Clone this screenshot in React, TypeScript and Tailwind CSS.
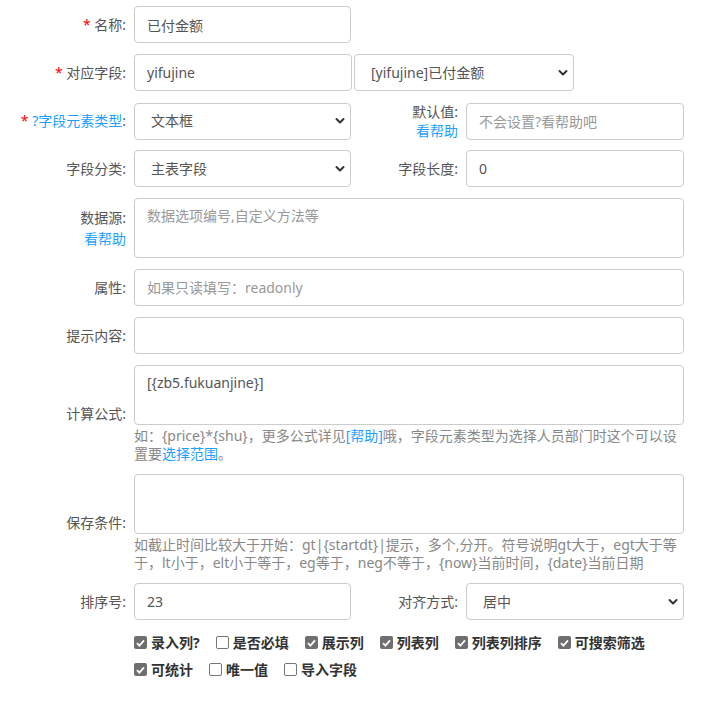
import React from 'react';

const font = "font-['Noto_Sans','Noto_Sans_CJK_SC',sans-serif]";
const inputCls =
  'h-[37px] w-full rounded border border-[#ccc] bg-white px-3 text-sm text-[#555] outline-none placeholder:text-[#999]';
const areaCls =
  'block h-[60px] w-full resize-none rounded border border-[#ccc] bg-white px-3 pt-[7px] text-sm leading-5 text-[#555] outline-none placeholder:text-[#999]';
const linkCls = 'text-[#1e9fff]';

function Req() {
  return <span className="text-[#f00]">* </span>;
}

function Label({ children }: { children: React.ReactNode }) {
  return <div className="pr-2 text-right text-sm leading-[20px] text-[#555]">{children}</div>;
}

function Label2({ children }: { children: React.ReactNode }) {
  return <div className="pr-[8px] text-right text-sm leading-[19px] text-[#555]">{children}</div>;
}

function Select({ value, className = '' }: { value: string; className?: string }) {
  return (
    <div className={`relative ${className}`}>
      <select
        defaultValue={value}
        className="h-[37px] w-full appearance-none rounded border border-[#ccc] bg-white pl-[16px] pr-8 text-sm text-[#555] outline-none"
      >
        <option>{value}</option>
      </select>
      <svg
        className="pointer-events-none absolute right-[6px] top-1/2 -translate-y-1/2"
        width="10"
        height="7"
        viewBox="0 0 10 7"
      >
        <path d="M1.5 1.5l3.5 3.5 3.5-3.5" fill="none" stroke="#333" strokeWidth="2" strokeLinecap="round" strokeLinejoin="round" />
      </svg>
    </div>
  );
}

function Check({ label, checked }: { label: string; checked?: boolean }) {
  return (
    <span className="mr-[16px] inline-flex items-center">
      {checked ? (
        <span className="flex h-[13px] w-[13px] items-center justify-center rounded-[2px] bg-[#6f6f6f]">
          <svg width="9" height="8" viewBox="0 0 9 8">
            <path d="M1 4.2l2.4 2.4L8 1.4" fill="none" stroke="#fff" strokeWidth="1.8" />
          </svg>
        </span>
      ) : (
        <span className="h-[13px] w-[13px] rounded-[2px] border border-[#767676] bg-white" />
      )}
      <span className="ml-[4px] text-sm font-bold text-[#333]">{label}</span>
    </span>
  );
}

const grid = 'grid grid-cols-[134px_217px_115px_218px] items-center';
const row = `${grid} h-[37px]`;
const hintCls = 'mt-[2px] whitespace-nowrap text-sm leading-[18px] text-[#888]';

export default function App() {
  return (
    <div className={`${font} min-h-screen bg-white pt-[6px]`}>
      <div className="flex w-[684px] flex-col gap-[11px]">
        <div className={row}>
          <Label>
            <Req />名称:
          </Label>
          <input className={inputCls} defaultValue="已付金额" />
        </div>

        <div className={row}>
          <Label>
            <Req />对应字段:
          </Label>
          <div className="col-span-3 flex">
            <input className={`${inputCls} !w-[218px]`} defaultValue="yifujine" />
            <Select value="[yifujine]已付金额" className="ml-[2px] w-[220px]" />
          </div>
        </div>

        <div className={row}>
          <Label>
            <Req />
            <span className={linkCls}>?字段元素类型</span>:
          </Label>
          <Select value="文本框" />
          <Label2>
            默认值:
            <br />
            <span className={linkCls}>看帮助</span>
          </Label2>
          <input className={inputCls} placeholder="不会设置?看帮助吧" />
        </div>

        <div className={row}>
          <Label>字段分类:</Label>
          <Select value="主表字段" />
          <Label2>字段长度:</Label2>
          <input className={inputCls} defaultValue="0" />
        </div>

        <div className={grid}>
          <div className="pr-2 text-right text-sm leading-[21px] text-[#555]">
            数据源:
            <br />
            <span className={linkCls}>看帮助</span>
          </div>
          <div className="col-span-3">
            <textarea className={areaCls} placeholder="数据选项编号,自定义方法等" />
          </div>
        </div>

        <div className={row}>
          <Label>属性:</Label>
          <div className="col-span-3">
            <input className={inputCls} placeholder="如果只读填写：readonly" />
          </div>
        </div>

        <div className={row}>
          <Label>提示内容:</Label>
          <div className="col-span-3">
            <input className={inputCls} />
          </div>
        </div>

        <div className={grid}>
          <Label>计算公式:</Label>
          <div className="col-span-3">
            <textarea className={areaCls} defaultValue="[{zb5.fukuanjine}]" />
            <div className={hintCls}>
              如：{'{price}'}*{'{shu}'}，更多公式详见<span className={linkCls}>[帮助]</span>
              哦，字段元素类型为选择人员部门时这个可以设
              <br />
              置要<span className={linkCls}>选择范围</span>。
            </div>
          </div>
        </div>

        <div className={grid}>
          <Label>保存条件:</Label>
          <div className="col-span-3">
            <textarea className={areaCls} />
            <div className={hintCls}>
              如截止时间比较大于开始：gt|{'{startdt}'}|提示，多个,分开。符号说明gt大于，egt大于等
              <br />
              于，lt小于，elt小于等于，eg等于，neg不等于，{'{now}'}当前时间，{'{date}'}当前日期
            </div>
          </div>
        </div>

        <div className={row}>
          <Label>排序号:</Label>
          <input className={inputCls} defaultValue="23" />
          <Label2>对齐方式:</Label2>
          <Select value="居中" />
        </div>
      </div>

      <div className="ml-[134px] mt-[9px]">
        <div className="flex h-[27px] items-center">
          <Check label="录入列?" checked />
          <Check label="是否必填" />
          <Check label="展示列" checked />
          <Check label="列表列" checked />
          <Check label="列表列排序" checked />
          <Check label="可搜索筛选" checked />
        </div>
        <div className="flex h-[27px] items-center">
          <Check label="可统计" checked />
          <Check label="唯一值" />
          <Check label="导入字段" />
        </div>
      </div>
    </div>
  );
}
